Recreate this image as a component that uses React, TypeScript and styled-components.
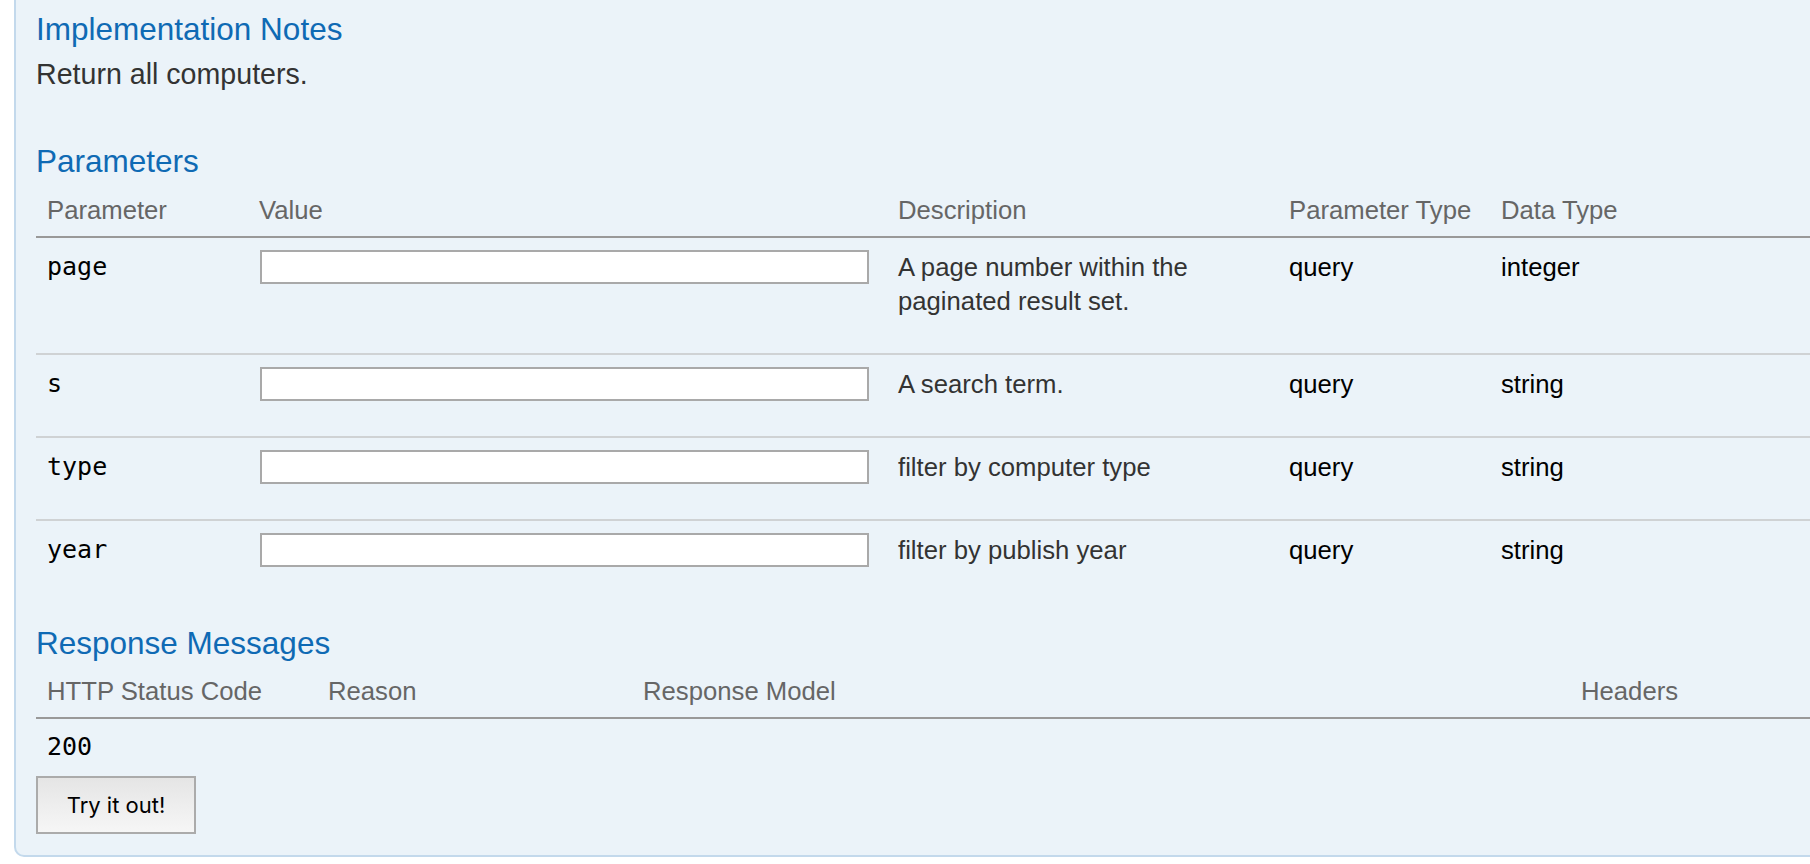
import React from "react";
import styled, { createGlobalStyle } from "styled-components";

const GlobalStyle = createGlobalStyle`
  html, body {
    margin: 0;
    padding: 0;
    background: #ffffff;
    overflow: hidden;
  }
  body {
    font-family: "Liberation Sans", Arial, sans-serif;
  }
`;

const Page = styled.div`
  width: 1810px;
  height: 864px;
  overflow: hidden;
  background: #ffffff;
`;

const Panel = styled.div`
  margin-left: 14px;
  width: 1860px;
  box-sizing: border-box;
  background: #ebf3f9;
  border-left: 2px solid #c3d9ec;
  border-bottom: 2px solid #c3d9ec;
  border-bottom-left-radius: 10px;
  padding: 11px 20px 21px 20px;
`;

const Heading = styled.h4<{ $top?: number }>`
  margin: ${(p) => p.$top ?? 0}px 0 0 0;
  font-family: "Liberation Sans", Arial, sans-serif;
  font-weight: normal;
  font-size: 31.5px;
  line-height: 36px;
  color: #0f6ab4;
`;

const Notes = styled.p`
  margin: 7px 0 0 0;
  font-size: 28.6px;
  line-height: 40px;
  color: #333333;
`;

const Table = styled.div`
  display: flex;
  flex-direction: column;
`;

const GridRow = styled.div<{ $cols: string; $divider?: boolean; $head?: boolean }>`
  display: grid;
  grid-template-columns: ${(p) => p.$cols};
  border-bottom: ${(p) =>
    p.$head ? "2px solid #999999" : p.$divider ? "2px solid #cfd2d4" : "none"};
`;

const HeadCell = styled.div<{ $pt: number }>`
  padding: ${(p) => p.$pt}px 11px 9px 11px;
  font-size: 25.7px;
  line-height: 34px;
  color: #666666;
  white-space: nowrap;
`;

const Cell = styled.div<{ $pt?: number; $pb?: number }>`
  padding: ${(p) => p.$pt ?? 12}px 11px ${(p) => p.$pb ?? 35}px 11px;
  font-size: 25.7px;
  line-height: 34px;
  color: #000000;
`;

const CodeCell = styled(Cell)`
  font-family: "DejaVu Sans Mono", "Liberation Mono", monospace;
  font-size: 25px;
`;

const DescCell = styled(Cell)`
  color: #333333;
`;

const ValueCell = styled(Cell)`
  padding-left: 12px;
`;

const TextInput = styled.input`
  display: block;
  box-sizing: border-box;
  width: 609px;
  height: 34px;
  margin: 0;
  padding: 2px 6px;
  border: 2px solid #a9a9a9;
  background: #ffffff;
  font-size: 22px;
  outline: none;
`;

const TryButton = styled.button`
  display: block;
  box-sizing: border-box;
  width: 160px;
  height: 58px;
  margin: 0;
  padding: 0;
  border: 2px solid #ababab;
  background: linear-gradient(#e5e5e5, #f6f6f6);
  font-family: Inter, "Noto Sans", sans-serif;
  font-size: 22px;
  color: #000000;
  cursor: pointer;
`;

const paramCols = "212px 639px 391px 212px 1fr";
const respCols = "281px 315px 938px 1fr";

type Param = {
  name: string;
  desc: React.ReactNode;
  kind: string;
  dataType: string;
};

const params: Param[] = [
  {
    name: "page",
    desc: (
      <>
        A page number within the
        <br />
        paginated result set.
      </>
    ),
    kind: "query",
    dataType: "integer",
  },
  { name: "s", desc: "A search term.", kind: "query", dataType: "string" },
  { name: "type", desc: "filter by computer type", kind: "query", dataType: "string" },
  { name: "year", desc: "filter by publish year", kind: "query", dataType: "string" },
];

export default function App() {
  return (
    <Page>
      <GlobalStyle />
      <Panel>
        <Heading>Implementation Notes</Heading>
        <Notes>Return all computers.</Notes>

        <Heading $top={49}>Parameters</Heading>
        <Table>
          <GridRow $cols={paramCols} $head>
            <HeadCell $pt={14}>Parameter</HeadCell>
            <HeadCell $pt={14}>Value</HeadCell>
            <HeadCell $pt={14}>Description</HeadCell>
            <HeadCell $pt={14}>Parameter Type</HeadCell>
            <HeadCell $pt={14}>Data Type</HeadCell>
          </GridRow>
          {params.map((p, i) => (
            <GridRow key={p.name} $cols={paramCols} $divider={i < params.length - 1}>
              <CodeCell>{p.name}</CodeCell>
              <ValueCell>
                <TextInput type="text" aria-label={p.name} />
              </ValueCell>
              <DescCell>{p.desc}</DescCell>
              <Cell>{p.kind}</Cell>
              <Cell>{p.dataType}</Cell>
            </GridRow>
          ))}
        </Table>

        <Heading $top={23}>Response Messages</Heading>
        <Table>
          <GridRow $cols={respCols} $head>
            <HeadCell $pt={13}>HTTP Status Code</HeadCell>
            <HeadCell $pt={13}>Reason</HeadCell>
            <HeadCell $pt={13}>Response Model</HeadCell>
            <HeadCell $pt={13}>Headers</HeadCell>
          </GridRow>
          <GridRow $cols={respCols}>
            <CodeCell $pt={11} $pb={12}>200</CodeCell>
            <Cell $pt={11} $pb={12} />
            <Cell $pt={11} $pb={12} />
            <Cell $pt={11} $pb={12} />
          </GridRow>
        </Table>
        <TryButton type="button">Try it out!</TryButton>
      </Panel>
    </Page>
  );
}
